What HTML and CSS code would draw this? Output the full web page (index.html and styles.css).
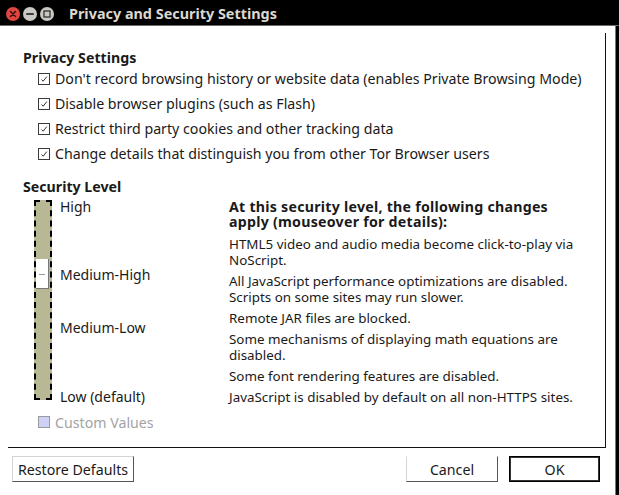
FILE: index.html
```html
<!DOCTYPE html>
<html>
<head>
<meta charset="utf-8">
<link rel="stylesheet" href="styles.css">
</head>
<body>
<div class="window">
  <div class="titlebar">
    <div class="wbtns">
      <span class="wbtn close"><svg width="14" height="14" viewBox="0 0 14 14"><path d="M4.5 4.5L9.5 9.5M9.5 4.5L4.5 9.5" stroke="#3a1010" stroke-width="1.6" stroke-linecap="round"/></svg></span>
      <span class="wbtn"><svg width="14" height="14" viewBox="0 0 14 14"><path d="M4 7H10" stroke="#3c3c3c" stroke-width="2" stroke-linecap="round"/></svg></span>
      <span class="wbtn"><svg width="14" height="14" viewBox="0 0 14 14"><rect x="4" y="4" width="6" height="6" fill="none" stroke="#3c3c3c" stroke-width="1.4"/></svg></span>
    </div>
    <div class="title">Privacy and Security Settings</div>
  </div>
  <div class="content">
    <div class="frame">
      <div class="heading">Privacy Settings</div>
      <div class="checks">
        <div class="check"><span class="box"><svg width="10" height="10" viewBox="0 0 10 10"><path d="M2.5 5.5L4.2 7.2L7.8 2.6" fill="none" stroke="#333" stroke-width="1"/></svg></span>Don't record browsing history or website data (enables Private Browsing Mode)</div>
        <div class="check"><span class="box"><svg width="10" height="10" viewBox="0 0 10 10"><path d="M2.5 5.5L4.2 7.2L7.8 2.6" fill="none" stroke="#333" stroke-width="1"/></svg></span>Disable browser plugins (such as Flash)</div>
        <div class="check"><span class="box"><svg width="10" height="10" viewBox="0 0 10 10"><path d="M2.5 5.5L4.2 7.2L7.8 2.6" fill="none" stroke="#333" stroke-width="1"/></svg></span>Restrict third party cookies and other tracking data</div>
        <div class="check"><span class="box"><svg width="10" height="10" viewBox="0 0 10 10"><path d="M2.5 5.5L4.2 7.2L7.8 2.6" fill="none" stroke="#333" stroke-width="1"/></svg></span>Change details that distinguish you from other Tor Browser users</div>
      </div>
      <div class="heading sec">Security Level</div>
      <div class="security">
        <div class="levels">
          <div class="scale">
            <div class="track"><div class="thumb"><span class="grip"></span></div></div>
            <div class="labels">
              <div class="lbl l1">High</div>
              <div class="lbl l2">Medium-High</div>
              <div class="lbl l3">Medium-Low</div>
              <div class="lbl l4">Low (default)</div>
            </div>
          </div>
          <div class="check custom"><span class="box disabled"></span>Custom Values</div>
        </div>
        <div class="desc">
          <div class="desc-head">At this security level, the following changes apply (mouseover for details):</div>
          <div class="item">HTML5 video and audio media become click-to-play via NoScript.</div>
          <div class="item">All JavaScript performance optimizations are disabled. Scripts on some sites may run slower.</div>
          <div class="item">Remote JAR files are blocked.</div>
          <div class="item">Some mechanisms of displaying math equations are disabled.</div>
          <div class="item">Some font rendering features are disabled.</div>
          <div class="item">JavaScript is disabled by default on all non-HTTPS sites.</div>
        </div>
      </div>
    </div>
    <div class="footer">
      <button class="btn restore">Restore Defaults</button>
      <div class="spacer"></div>
      <button class="btn cancel">Cancel</button>
      <button class="btn ok">OK</button>
    </div>
  </div>
</div>
</body>
</html>
```
FILE: styles.css
```css
html, body {
  margin: 0;
  padding: 0;
  background: #000;
}
body {
  font-family: "Noto Sans", "DejaVu Sans", sans-serif;
  font-size: 14.2px;
  color: #1a1a1a;
}
.window {
  width: 619px;
  height: 495px;
  display: flex;
  flex-direction: column;
}
.titlebar {
  height: 25px;
  background: #000;
  border-bottom: 1px solid #6a6a6a;
  display: flex;
  align-items: center;
}
.wbtns {
  display: flex;
  gap: 3px;
  margin-left: 6px;
  margin-top: 2px;
}
.wbtn {
  width: 14px;
  height: 14px;
  border-radius: 50%;
  background: #c9c8c3;
  display: flex;
}
.wbtn.close {
  background: #e0463e;
}
.title {
  margin-left: 15px;
  margin-top: 2px;
  color: #dcd8cf;
  font-weight: bold;
  font-size: 14.4px;
}
.content {
  flex: 1;
  background: #fff;
  width: 616px;
  border-right: 1px solid #7a7a7a;
  padding-top: 7px;
  box-sizing: border-box;
}
.frame {
  margin-left: 8px;
  width: 598px;
  height: 415px;
  box-sizing: border-box;
  border-right: 1px solid #111;
  border-bottom: 1px solid #111;
  padding: 17px 0 0 15px;
}
.heading {
  font-weight: bold;
  line-height: 16px;
}
.heading.sec {
  margin-top: 13px;
}
.checks {
  display: flex;
  flex-direction: column;
}
.check {
  height: 25px;
  display: flex;
  align-items: center;
  padding-left: 15px;
  white-space: nowrap;
}
.box {
  width: 10px;
  height: 10px;
  border: 1px solid #3a3a3a;
  background: #fff;
  margin-right: 5px;
  display: flex;
  flex-shrink: 0;
}
.box.disabled {
  background: #cfd0f6;
  border-color: #9a9a9a;
}
.security {
  display: flex;
  margin-top: 5px;
}
.levels {
  width: 206px;
  flex-shrink: 0;
}
.scale {
  display: flex;
  padding-left: 11px;
}
.track {
  width: 14px;
  height: 196px;
  border: 2px dashed #000;
  background: #b9b894;
  position: relative;
}
.thumb {
  position: absolute;
  left: 0;
  top: 57px;
  width: 12px;
  height: 29px;
  background: #fff;
  border-right: 1px solid #777;
  border-bottom: 1px solid #777;
  display: flex;
  align-items: center;
}
.grip {
  display: block;
  width: 6px;
  height: 1px;
  background: #999;
  margin-left: 3px;
  margin-top: 2px;
}
.labels {
  margin-left: 8px;
  display: flex;
  flex-direction: column;
  font-size: 14px;
}
.lbl {
  line-height: 16px;
}
.l1 { margin-top: -1px; }
.l2 { margin-top: 52px; }
.l3 { margin-top: 37px; }
.l4 { margin-top: 53px; }
.check.custom {
  height: 16px;
  margin-top: 9px;
  color: #a3a3a3;
}
.desc {
  width: 356px;
  line-height: 16px;
  font-size: 13.4px;
}
.desc-head {
  font-weight: bold;
  font-size: 14.2px;
  letter-spacing: 0.25px;
  line-height: 15px;
  margin-top: -1px;
  margin-bottom: 7px;
}
.item {
  margin-bottom: 5px;
}
.footer {
  display: flex;
  padding: 8px 0 0 12px;
  align-items: flex-start;
}
.spacer {
  flex: 1;
}
.btn {
  font-family: inherit;
  font-size: 14.2px;
  color: #1a1a1a;
  background: #fff;
  height: 26px;
  padding: 0;
  border: 1px solid #d4d4d4;
  border-right-color: #555;
  border-bottom-color: #555;
  border-radius: 0;
}
.restore {
  width: 122px;
}
.cancel {
  width: 92px;
  border-top-color: #fff;
}
.ok {
  width: 91px;
  margin-left: 11px;
  margin-right: 15px;
  border: 1px solid #000;
  box-shadow: inset 0 0 0 1px #333;
}
```
